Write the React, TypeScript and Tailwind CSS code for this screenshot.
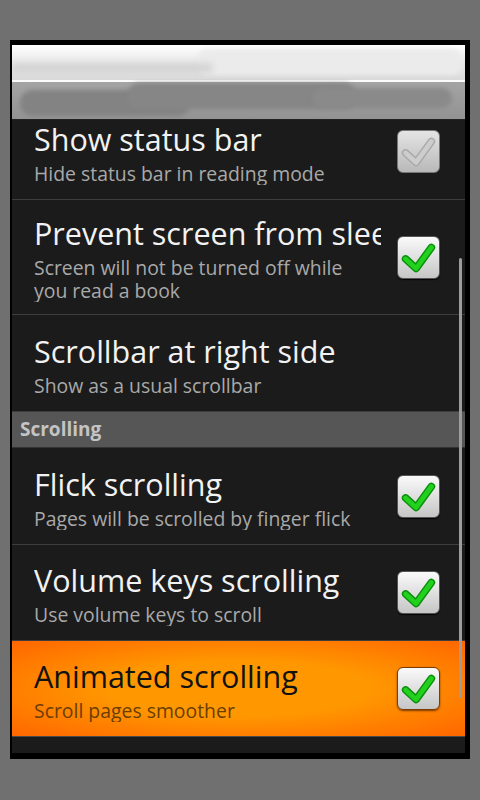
import React from 'react';

type Item = {
  title: string;
  summary: string;
  checked: boolean;
  disabled?: boolean;
  highlight?: boolean;
  h: string;
};

const Check = ({ disabled, onOrange }: { disabled?: boolean; onOrange?: boolean }) => {
  return (
    <div
      className={
        'w-[43px] h-[43px] shrink-0 rounded-[6px] border ' +
        (disabled
          ? 'border-[#777] bg-gradient-to-b from-[#e4e4e4] to-[#b9b9b9]'
          : onOrange
          ? 'border-[#7a3c00] bg-gradient-to-b from-[#fafafa] to-[#c6c6c6] shadow-[0_1px_2px_rgba(90,40,0,0.8)]'
          : 'border-[#555] bg-gradient-to-b from-[#fafafa] to-[#c6c6c6] shadow-[0_1px_1px_rgba(0,0,0,0.9)]')
      }
    >
      <svg width="41" height="41" viewBox="0 0 43 43">
        <polyline
          points="8,23 19,33 35,11"
          fill="none"
          stroke={disabled ? '#a9a9a9' : '#0b8f0b'}
          strokeWidth="8"
          strokeLinecap="round"
          strokeLinejoin="round"
        />
        <polyline
          points="8,23 19,33 35,11"
          fill="none"
          stroke={disabled ? '#cdcdcd' : '#22d01e'}
          strokeWidth="5"
          strokeLinecap="round"
          strokeLinejoin="round"
        />
      </svg>
    </div>
  );
};

const Row = ({ item, first }: { item: Item; first?: boolean }) => {
  return (
    <div
      className={
        'flex items-center pl-[22px] pr-[25px] border-b ' +
        item.h +
        (first ? ' -mt-[16px]' : '') +
        (item.highlight
          ? ' border-[#4a4a4a] bg-[radial-gradient(ellipse_at_center,#ff9800_40%,#ff6600_100%)]'
          : ' border-[#3d3d3d]')
      }
    >
      <div className="flex-1 min-w-0 overflow-hidden mr-[16px]">
        <div
          className={
            'text-[30.5px] leading-[42px] whitespace-nowrap ' +
            (item.highlight ? 'text-[#111]' : 'text-[#f2f2f2]')
          }
        >
          {item.title}
        </div>
        <div
          className={
            'mt-[2px] text-[19.4px] leading-[23px] pr-[20px] ' +
            (item.highlight ? 'text-[#6a3e00]' : 'text-[#a9a9a9]')
          }
        >
          {item.summary}
        </div>
      </div>
      {item.checked ? <Check disabled={item.disabled} onOrange={item.highlight} /> : <div className="w-[43px] h-[43px] shrink-0" />}
    </div>
  );
};

const display: Item[] = [
  { title: 'Show status bar', summary: 'Hide status bar in reading mode', checked: true, disabled: true, h: 'h-[96px]' },
  {
    title: 'Prevent screen from sleeping',
    summary: 'Screen will not be turned off while you read a book',
    checked: true,
    h: 'h-[115px]',
  },
  { title: 'Scrollbar at right side', summary: 'Show as a usual scrollbar', checked: false, h: 'h-[97px]' },
];

const scrolling: Item[] = [
  { title: 'Flick scrolling', summary: 'Pages will be scrolled by finger flick', checked: true, h: 'h-[97px]' },
  { title: 'Volume keys scrolling', summary: 'Use volume keys to scroll', checked: true, h: 'h-[96px]' },
  { title: 'Animated scrolling', summary: 'Scroll pages smoother', checked: true, highlight: true, h: 'h-[96px]' },
];

export default function App() {
  return (
    <div className="w-[480px] h-[800px] bg-[#707070] pt-[40px] pl-[10px] font-['Open_Sans',sans-serif]">
      <div className="w-[460px] h-[719px] bg-black pt-[5px] pl-[2px] pr-[5px] pb-[6px] flex flex-col">
        {/* title bar, blurred out */}
        <div className="h-[75px] shrink-0 flex flex-col overflow-hidden border-b border-[#222]">
          <div className="relative h-[37px] bg-gradient-to-b from-[#ffffff] via-[#e9e9e9] to-[#dadada] border-b-[2px] border-[#fbfbfb]">
            <div className="absolute left-[185px] top-[4px] w-[265px] h-[26px] rounded-[10px] bg-[#ebebeb] blur-[2px]" />
            <div className="absolute left-[0px] top-[18px] w-[200px] h-[10px] bg-[#d4d4d4] blur-[3px]" />
          </div>
          <div className="relative flex-1 bg-gradient-to-b from-[#a4a4a4] to-[#939393]">
            <div className="absolute left-[8px] top-[8px] w-[170px] h-[26px] rounded-[13px] bg-[#838383] blur-[2px]" />
            <div className="absolute left-[115px] top-[1px] w-[230px] h-[26px] rounded-[13px] bg-[#868686] blur-[2px]" />
            <div className="absolute left-[300px] top-[6px] w-[140px] h-[20px] rounded-[10px] bg-[#8a8a8a] blur-[2px]" />
          </div>
        </div>

        {/* preference list */}
        <div className="relative flex-1 overflow-hidden bg-[#1b1b1b]">
          {display.map((it, i) => (
            <Row key={it.title} item={it} first={i === 0} />
          ))}
          <div className="h-[36px] bg-[#565656] border-b border-[#333] pl-[8px] flex items-center text-[19px] font-bold text-[#c4c4c4]">
            Scrolling
          </div>
          {scrolling.map((it) => (
            <Row key={it.title} item={it} />
          ))}
          <div className="absolute right-[3px] top-[138px] w-[3px] h-[440px] rounded-full bg-[#9c9c9c]" />
        </div>
      </div>
    </div>
  );
}
